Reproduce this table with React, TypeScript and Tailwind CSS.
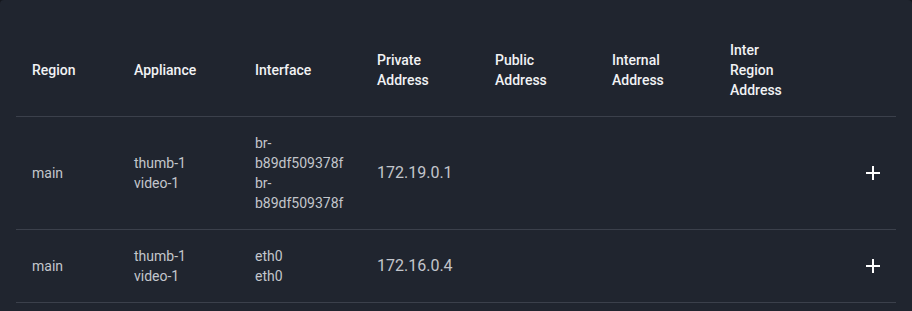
import React from "react";

interface Row {
  region: string;
  appliances: string[];
  interfaces: string[];
  privateAddress: string;
}

const rows: Row[] = [
  {
    region: "main",
    appliances: ["thumb-1", "video-1"],
    interfaces: ["br-b89df509378f", "br-b89df509378f"],
    privateAddress: "172.19.0.1",
  },
  {
    region: "main",
    appliances: ["thumb-1", "video-1"],
    interfaces: ["eth0", "eth0"],
    privateAddress: "172.16.0.4",
  },
];

const headers = [
  "Region",
  "Appliance",
  "Interface",
  "Private Address",
  "Public Address",
  "Internal Address",
];

const PlusIcon = () => (
  <svg width="14" height="14" viewBox="0 0 14 14" className="inline-block">
    <path d="M7 0v14M0 7h14" stroke="#ffffff" strokeWidth="2" fill="none" />
  </svg>
);

export default function App() {
  return (
    <div className="w-[912px] h-[311px] bg-[#14171d] overflow-hidden font-['Roboto',sans-serif]">
      <div className="h-[330px] rounded-[4px] bg-[#20252f] px-4 pt-6">
        <table className="w-[880px] table-fixed border-collapse text-left">
          <colgroup>
            <col className="w-[102px]" />
            <col className="w-[121px]" />
            <col className="w-[122px]" />
            <col className="w-[118px]" />
            <col className="w-[117px]" />
            <col className="w-[118px]" />
            <col className="w-[118px]" />
            <col />
          </colgroup>
          <thead>
            <tr className="border-b border-[#3b404b]">
              {headers.map((h) => (
                <th
                  key={h}
                  className="py-4 pl-4 pr-4 text-sm leading-5 font-medium text-[#f1f2f4] align-middle"
                >
                  {h}
                </th>
              ))}
              <th className="py-4 pl-4 pr-10 text-sm leading-5 font-medium text-[#f1f2f4] align-middle">
                Inter Region Address
              </th>
              <th className="py-4" />
            </tr>
          </thead>
          <tbody>
            {rows.map((r, i) => (
              <tr key={i} className="border-b border-[#3b404b]">
                <td className="py-4 pl-4 text-sm leading-5 text-[#c3c6cc] align-middle">
                  {r.region}
                </td>
                <td className="py-4 pl-4 text-sm leading-5 text-[#c3c6cc] align-middle">
                  {r.appliances.map((a, j) => (
                    <div key={j}>{a}</div>
                  ))}
                </td>
                <td className="py-4 pl-4 pr-4 text-sm leading-5 text-[#c3c6cc] align-middle">
                  {r.interfaces.map((a, j) => (
                    <div key={j}>{a}</div>
                  ))}
                </td>
                <td className="py-4 pl-4 text-base leading-6 text-[#c3c6cc] align-middle">
                  {r.privateAddress}
                </td>
                <td className="py-4 pl-4" />
                <td className="py-4 pl-4" />
                <td className="py-4 pl-4" />
                <td className="py-4 align-middle">
                  <div className="flex justify-center pl-[18px]">
                    <PlusIcon />
                  </div>
                </td>
              </tr>
            ))}
          </tbody>
        </table>
      </div>
    </div>
  );
}
